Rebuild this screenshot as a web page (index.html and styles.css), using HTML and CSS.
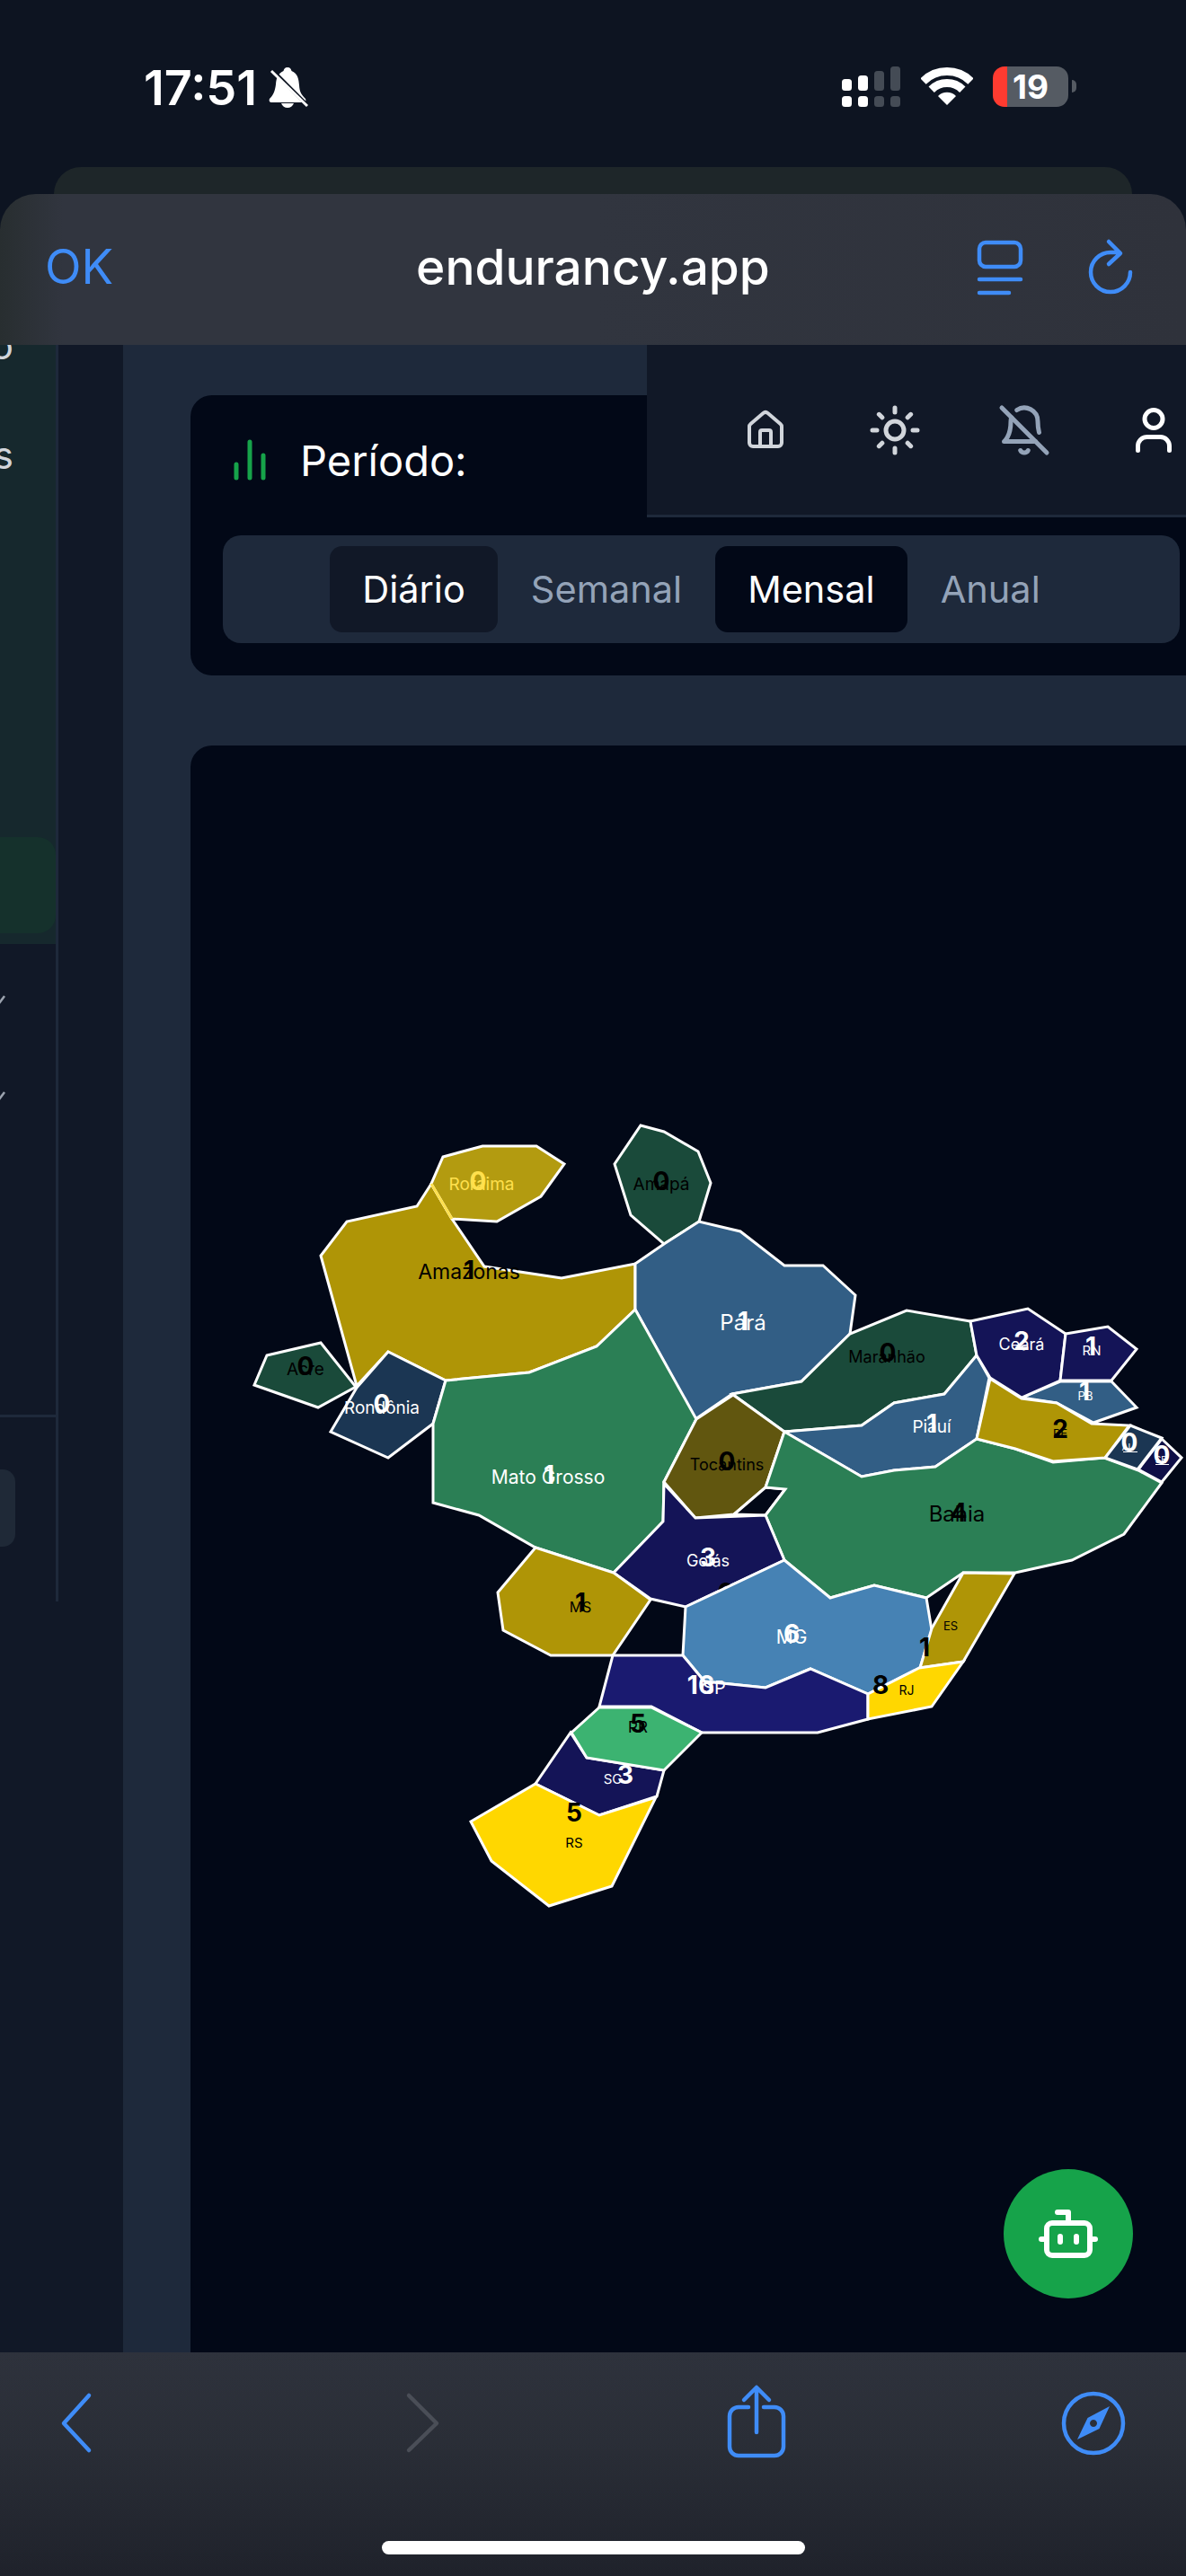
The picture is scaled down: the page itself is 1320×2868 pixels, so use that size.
FILE: index.html
```html
<!DOCTYPE html>
<html lang="pt-BR">
<head>
<meta charset="utf-8">
<title>endurancy.app</title>
<link rel="stylesheet" href="styles.css">
</head>
<body>
<div class="phone">
  <header class="status">
    <span class="time">17:51</span>
    <svg class="ic-mute" viewBox="299 74 44 48"><path class="w" d="M320 75c3 0 4 2 4.500 4 7 3 8 9 8.500 16 .5 8 3 11 7 15 1 2 0 4-2 4h-36c-2 0-3-2-2-4 4-4 6-8 7-16 .5-7 2-12 8.500-15 .5-2 1.500-4 4.500-4zM313 115h14c-1 3-4 5-7 5s-6-2-7-5z"/><path class="mute-gap" d="M301 76l41 41"/><path class="mute-line" d="M302 79l40 39"/></svg>
    <svg class="ic-signal" viewBox="937 74 66 46">
      <rect class="w" x="937" y="88" width="11" height="13" rx="3.500"/><rect class="w" x="955" y="84" width="11" height="17" rx="3.500"/><rect class="sg" x="973" y="79" width="11" height="22" rx="3.500"/><rect class="sg" x="991" y="74" width="11" height="27" rx="3.500"/>
      <rect class="w" x="937" y="107" width="11" height="12" rx="3.500"/><rect class="w" x="955" y="107" width="11" height="12" rx="3.500"/><rect class="sg" x="973" y="107" width="11" height="12" rx="3.500"/><rect class="sg" x="991" y="107" width="11" height="12" rx="3.500"/>
    </svg>
    <svg class="ic-wifi" viewBox="0 0 58 44"><path class="wifi-arc" d="M2.500 16.500A37.500 37.500 0 0 1 55.500 16.500"/><path class="wifi-arc" d="M11.700 25.700A24.500 24.500 0 0 1 46.300 25.700"/><path class="w" d="M29 43L19 33A14 14 0 0 1 39 33Z"/></svg>
    <div class="battery">19</div><div class="nub"></div>
  </header>
  <div class="peek"></div>
  <div class="sheet">
    <span class="ok">OK</span>
    <span class="host">endurancy.app</span>
    <div class="sheet-icons">
      <svg class="ic-blue" viewBox="1084 262 58 70"><rect x="1090" y="270" width="46" height="27" rx="7"/><path d="M1090 311h46M1090 326h33"/></svg>
      <svg class="ic-blue" viewBox="1206 262 60 70"><path d="M1258 303A22 22 0 1 1 1236 281H1246M1234 269l13 13-13 12"/></svg>
    </div>
  </div>
  <main class="content">
    <aside class="sidebar">
      <div class="side-green">
        <span class="side-label">Início</span>
        <span class="side-label">Vendas</span>
        <div class="side-active"></div>
      </div>
      <div class="side-chevs">
        <svg class="chev" viewBox="0 0 6 10"><path d="M-1 9L5 1"/></svg>
        <svg class="chev" viewBox="0 0 6 10"><path d="M-1 9L5 1"/></svg>
      </div>
      <div class="side-foot"><div class="side-btn"></div></div>
    </aside>
    <div class="gutter"></div>
    <div class="main">
      <section class="card period">
        <div class="period-head">
          <svg class="ic-chart" viewBox="0 0 24 24"><path d="M18 20V10M12 20V4M6 20v-6"/></svg>
          <h2 class="period-title">Período:</h2>
        </div>
        <div class="tabs">
          <span class="tab tab-day">Diário</span>
          <span class="tab">Semanal</span>
          <span class="tab tab-month">Mensal</span>
          <span class="tab">Anual</span>
        </div>
      </section>
      <section class="card map-card">
        <svg class="map" viewBox="212 830 1137 1789">
          <g class="regions">
            <polygon class="gold" points="480,1318 464,1343 386,1360 357,1398 397,1543 432,1505 496,1537 589,1528 664,1499 707,1458 707,1407 625,1423 539,1410 503,1357"/>
            <polygon class="gold2" points="493,1288 537,1276 597,1276 628,1296 602,1332 553,1360 503,1357 480,1318"/>
            <polygon class="pine" points="297,1509 357,1495 396,1544 354,1567 283,1542"/>
            <polygon class="navy" points="432,1505 496,1537 482,1585 432,1623 368,1594 397,1545"/>
            <polygon class="pine" points="713,1253 739,1260 777,1282 791,1317 778,1360 739,1385 702,1353 684,1296"/>
            <polygon class="steel" points="707,1407 739,1385 778,1360 824,1371 873,1409 916,1409 952,1442 946,1485 892,1538 815,1552 774,1580 707,1458"/>
            <polygon class="sea" points="496,1537 589,1528 664,1499 707,1458 775,1580 739,1650 738,1694 683,1751 596,1723 533,1687 482,1673 482,1585"/>
            <polygon class="pine" points="815,1552 892,1538 946,1485 1009,1459 1080,1471 1087,1509 1051,1552 995,1562 959,1587 873,1594"/>
            <polygon class="steel" points="873,1594 959,1587 995,1562 1051,1552 1087,1509 1101,1534 1087,1602 1041,1633 995,1637 959,1644"/>
            <polygon class="olive" points="816,1553 873,1594 852,1656 817,1686 774,1690 739,1650 775,1580"/>
            <polygon class="ink" points="817,1686 852,1656 874,1658 852,1687"/>
            <polygon class="sea" points="873,1594 959,1644 995,1637 1041,1633 1087,1602 1130,1613 1172,1628 1229,1623 1267,1637 1293,1651 1251,1708 1193,1737 1130,1751 1072,1751 1031,1779 973,1765 924,1779 873,1737 852,1687 874,1658 852,1656"/>
            <polygon class="indigo" points="739,1652 774,1690 852,1687 873,1737 763,1789 724,1780 683,1751 738,1694"/>
            <text class="cnt t-black" x="808" y="1783">0</text>
            <polygon class="gold" points="596,1723 683,1751 724,1781 682,1843 613,1843 560,1815 554,1773"/>
            <polygon class="sky" points="763,1789 873,1737 924,1779 973,1765 1031,1779 1037,1815 1024,1857 966,1886 902,1858 852,1879 784,1872 760,1843"/>
            <polygon class="blue" points="682,1843 760,1843 784,1872 852,1879 902,1858 966,1886 966,1914 910,1929 781,1929 725,1900 667,1900"/>
            <polygon class="gold" points="1072,1751 1129,1752 1072,1850 1024,1857 1037,1813"/>
            <polygon class="yellow" points="966,1886 1023,1857 1072,1850 1037,1900 966,1914"/>
            <polygon class="indigo" points="635,1929 653,1957 739,1971 731,2000 667,2021 596,1986"/>
            <polygon class="mint" points="667,1901 725,1901 781,1929 739,1971 653,1957 636,1929"/>
            <polygon class="yellow" points="596,1986 667,2021 730,2001 681,2100 611,2122 547,2072 524,2028"/>
            <polygon class="steel" points="1180,1538 1237,1538 1265,1567 1217,1584 1176,1562 1137,1556"/>
            <polygon class="gold" points="1102,1535 1137,1557 1176,1562 1215,1585 1257,1587 1230,1623 1172,1627 1130,1613 1087,1602"/>
            <polygon class="indigo" points="1080,1471 1144,1457 1186,1485 1180,1537 1137,1556 1102,1534 1087,1509"/>
            <polygon class="indigo" points="1186,1485 1233,1477 1265,1502 1237,1537 1180,1537"/>
            <polygon class="navy" points="1258,1587 1293,1601 1266,1636 1230,1623"/>
            <polygon class="deep" points="1293,1602 1315,1623 1293,1650 1267,1636"/>
          </g>
          <line class="seam" x1="480" y1="1318" x2="503" y2="1357"/>
          <path class="tick" d="M1250 1616.500h16M1286 1630.500h15"/>
          <g class="labels">
            <text class="lbl s19 t-yellow" x="536" y="1325">Roraima</text><text class="cnt t-yellow" x="532" y="1325">0</text>
            <text class="lbl s23 t-black" x="522" y="1424">Amazonas</text><text class="cnt t-black" x="522" y="1424">1</text>
            <text class="lbl s19 t-black" x="340" y="1531">Acre</text><text class="cnt t-black" x="340" y="1531">0</text>
            <text class="lbl s19 t-white" x="425" y="1574">Rondônia</text><text class="cnt t-white" x="425" y="1573">0</text>
            <text class="lbl s19 t-black" x="736" y="1325">Amapá</text><text class="cnt t-black" x="736" y="1325">0</text>
            <text class="lbl s24 t-white" x="827" y="1481">Pará</text><text class="cnt t-white" x="827" y="1481">1</text>
            <text class="lbl s21 t-white" x="610" y="1652">Mato Grosso</text><text class="cnt t-white" x="611" y="1652">1</text>
            <text class="lbl s18 t-black" x="987" y="1517">Maranhão</text><text class="cnt t-black" x="988" y="1516">0</text>
            <text class="lbl s18 t-white" x="1137" y="1503">Ceará</text><text class="cnt t-white" x="1137" y="1503">2</text>
            <text class="lbl s15 t-white" x="1215" y="1509">RN</text><text class="cnt t-white" x="1214" y="1509">1</text>
            <text class="lbl s13 t-white" x="1208" y="1559">PB</text><text class="cnt t-white" x="1207" y="1559">1</text>
            <text class="lbl s19 t-white" x="1037" y="1595">Piauí</text><text class="cnt t-white" x="1037" y="1595">1</text>
            <text class="lbl s13 t-black" x="1180" y="1601">PE</text><text class="cnt t-black" x="1180" y="1601">2</text>
            <text class="lbl s10 t-white" x="1255" y="1615">AL</text><text class="cnt t-white" x="1257" y="1616">0</text>
            <text class="lbl s10 t-white" x="1292" y="1629">SE</text><text class="cnt t-white" x="1293" y="1630">0</text>
            <text class="lbl s18 t-black" x="809" y="1637">Tocantins</text><text class="cnt t-black" x="809" y="1637">0</text>
            <text class="lbl s24 t-black" x="1065" y="1694">Bahia</text><text class="cnt t-black" x="1067" y="1694">4</text>
            <text class="lbl s18 t-white" x="788" y="1744">Goiás</text><text class="cnt t-white" x="788" y="1744">3</text>
            <text class="lbl s16 t-black" x="646" y="1795">MS</text><text class="cnt t-black" x="646" y="1794">1</text>
            <text class="lbl s21 t-white" x="881" y="1830">MG</text><text class="cnt t-white" x="881" y="1829">6</text>
            <text class="lbl s20 t-white" x="795" y="1886">SP</text><text class="cnt t-white" x="780" y="1886">16</text>
            <text class="lbl s13 t-black" x="1058" y="1815">ES</text><text class="cnt t-black" x="1029" y="1844">1</text>
            <text class="lbl s14 t-black" x="1009" y="1887">RJ</text><text class="cnt t-black" x="980" y="1886">8</text>
            <text class="lbl s17 t-black" x="710" y="1929">PR</text><text class="cnt t-black" x="710" y="1929">5</text>
            <text class="lbl s15 t-white" x="682" y="1986">SC</text><text class="cnt t-white" x="696" y="1986">3</text>
            <text class="lbl s15 t-black" x="639" y="2057">RS</text><text class="cnt t-black" x="639" y="2028">5</text>
          </g>
        </svg>
      </section>
    </div>
    <nav class="topnav">
      <span class="nav-btn"><svg class="ic-nav ic-home" viewBox="0 0 24 24"><path d="M15 21v-8a1 1 0 0 0-1-1h-4a1 1 0 0 0-1 1v8"/><path d="M3 10a2 2 0 0 1 .709-1.528l7-5.999a2 2 0 0 1 2.582 0l7 5.999A2 2 0 0 1 21 10v9a2 2 0 0 1-2 2H5a2 2 0 0 1-2-2z"/></svg></span>
      <span class="nav-btn"><svg class="ic-nav ic-sun" viewBox="0 0 24 24"><circle cx="12" cy="12" r="4"/><path d="M12 2v2M12 20v2M4.930 4.930l1.410 1.410M17.660 17.660l1.410 1.410M2 12h2M20 12h2M6.340 17.660l-1.410 1.410M19.070 4.930l-1.410 1.410"/></svg></span>
      <span class="nav-btn"><svg class="ic-nav ic-bell" viewBox="0 0 24 24"><path d="M8.700 3A6 6 0 0 1 18 8a21.300 21.300 0 0 0 .6 5"/><path d="M17 17H3s3-2 3-9a4.670 4.670 0 0 1 .3-1.700"/><path d="M10.300 21a1.940 1.940 0 0 0 3.400 0"/><path d="M2 2l20 20"/></svg></span>
      <span class="nav-btn"><svg class="ic-nav ic-user" viewBox="0 0 24 24"><path d="M19 21v-2a4 4 0 0 0-4-4H9a4 4 0 0 0-4 4v2"/><circle cx="12" cy="7" r="4"/></svg></span>
    </nav>
    <button class="bot" type="button" aria-label="Assistente"><svg class="ic-bot" viewBox="0 0 24 24"><path d="M12 8V4H8"/><rect x="4" y="8" width="16" height="12" rx="2"/><path d="M2 14h2M20 14h2M15 13v2M9 13v2"/></svg></button>
  </main>
  <footer class="toolbar">
    <div class="tool-row">
      <svg class="tool ic-blue" viewBox="46 2650 80 96"><path d="M99 2667L71 2698 99 2728"/></svg>
      <svg class="tool ic-dim" viewBox="430 2650 80 96"><path d="M455 2667L486 2698 455 2728"/></svg>
      <svg class="tool ic-blue" viewBox="801 2650 80 96"><path d="M833 2680H822a10 10 0 0 0-10 10v34a10 10 0 0 0 10 10h40a10 10 0 0 0 10-10v-34a10 10 0 0 0-10-10H850M842 2708V2659M828 2672L842 2658 856 2672"/></svg>
      <svg class="tool ic-blue" viewBox="1177 2650 80 96"><circle cx="1217" cy="2698" r="33"/><path class="needle" fill-rule="evenodd" d="M1235 2679L1223.500 2704 1199 2716 1210.500 2692ZM1217 2694a4 4 0 1 0 .01 0Z"/></svg>
    </div>
    <div class="home-bar"></div>
  </footer>
</div>
</body>
</html>
```

FILE: styles.css
```css
* { box-sizing: border-box; }
html, body { margin: 0; padding: 0; background: #0d1421; }
body { font-family: Inter, "Liberation Sans", sans-serif; color: #fff; }
.phone { width: 1320px; height: 2868px; display: flex; flex-direction: column; overflow: hidden; position: relative; background: #0d1421; }

/* status bar */
.status { height: 186px; display: flex; align-items: flex-start; padding: 74px 0 0 160px; }
.time { width: 139px; font-size: 54px; font-weight: 600; line-height: 48px; letter-spacing: 0; white-space: nowrap; }
.ic-mute { width: 44px; height: 48px; }
.w { fill: #fff; }
.sg { fill: #444b55; }
.mute-gap { stroke: #0d1421; stroke-width: 4; fill: none; }
.mute-line { stroke: #fff; stroke-width: 3; fill: none; }
.ic-signal { width: 66px; height: 46px; margin-left: auto; }
.ic-wifi { width: 58px; height: 44px; margin-left: 22px; }
.wifi-arc { fill: none; stroke: #fff; stroke-width: 9; }
.battery { width: 84px; height: 45px; margin-left: 22px; border-radius: 13px; background: linear-gradient(90deg, #ff3b30 16px, #555b63 16px); display: flex; align-items: center; justify-content: center; font-size: 37px; font-weight: 700; }
.nub { width: 5px; height: 14px; margin: 15px 122px 0 4px; border-radius: 0 5px 5px 0; background: #555b63; }

/* browser sheet */
.peek { height: 30px; margin: 0 60px; background: #1e2629; border-radius: 30px 30px 0 0; }
.sheet { height: 168px; display: grid; grid-template-columns: 1fr auto 1fr; align-items: center; padding: 0 60px 6px 50px; border-radius: 40px 40px 0 0; background: linear-gradient(90deg, #282e30 0, #31353f 70px, #31353f 50%, #2f323b 100%); }
.ok { font-size: 53px; font-weight: 400; color: #3f8cf7; }
.host { font-size: 55px; font-weight: 500; color: #fff; margin-left: 10px; }
.sheet-icons { display: flex; justify-content: flex-end; gap: 64px; margin-right: -6px; }
.sheet-icons svg { width: 58px; height: 70px; }
.sheet-icons svg + svg { width: 60px; margin-left: 0; }
.ic-blue { fill: none; stroke: #3f8cf7; stroke-width: 4.500; stroke-linecap: round; stroke-linejoin: round; }
.ic-dim { fill: none; stroke: #4a4e57; stroke-width: 4.500; stroke-linecap: round; stroke-linejoin: round; }
.needle { fill: #3f8cf7; stroke: none; }

/* page */
.content { flex: 1; display: flex; position: relative; overflow: hidden; background: #111827; }
.sidebar { width: 65px; height: 1399px; flex: none; display: flex; flex-direction: column; border-right: 3px solid #1e293b; background: #111827; overflow: hidden; }
.side-green { height: 667px; background: #16282d; display: flex; flex-direction: column; align-items: flex-end; margin-top: 0; overflow: hidden; position: relative; padding-right: 47px; }
.side-label { font-size: 42px; line-height: 122px; color: #d1d5db; white-space: nowrap; }
.side-label:first-child { margin-top: -60px; }
.side-active { position: absolute; left: 0; right: 0; top: 548px; height: 107px; border-radius: 0 20px 20px 0; background: #15312c; }
.side-chevs { height: 527px; display: flex; flex-direction: column; padding-top: 57px; gap: 97px; border-bottom: 3px solid #1e293b; }
.chev { width: 6px; height: 10px; fill: none; stroke: #9ca3af; stroke-width: 2.500; overflow: hidden; }
.side-foot { flex: 1; padding-top: 58px; }
.side-btn { width: 17px; height: 86px; background: #1f2937; border-radius: 0 14px 14px 0; }
.gutter { width: 72px; flex: none; }
.main { flex: none; width: 1212px; padding: 56px 0 0 75px; background: #1e293b; display: flex; flex-direction: column; gap: 78px; }
.card { width: 1137px; background: #020817; border-radius: 24px; flex: none; }
.period { height: 312px; padding: 42px 36px 0; }
.period-head { display: flex; align-items: center; gap: 26px; height: 60px; }
.ic-chart { width: 60px; height: 60px; fill: none; stroke: #16a34a; stroke-width: 2; stroke-linecap: round; }
.period-title { margin: 0; font-size: 47px; font-weight: 400; }
.tabs { margin-top: 54px; height: 120px; border-radius: 20px; background: #1e293b; display: flex; align-items: center; justify-content: center; gap: 1px; }
.tab { height: 96px; padding: 0 36px; border-radius: 14px; display: flex; align-items: center; font-size: 41.500px; font-weight: 400; color: #94a3b8; }
.tab-day { background: #111827; color: #fff; }
.tab-month { background: #020817; color: #fff; }
.map-card { height: 1800px; border-radius: 24px 24px 0 0; }
.map { display: block; width: 1137px; height: 1789px; overflow: visible; }
.regions polygon { stroke: #fff; stroke-width: 3; }
.gold { fill: #af9506; } .gold2 { fill: #b39b10; } .pine { fill: #1a4a3a; } .navy { fill: #1b3653; }
.steel { fill: #325e85; } .sea { fill: #2b7f55; } .olive { fill: #61560f; } .ink { fill: #020817; }
.indigo { fill: #141457; } .sky { fill: #4682b4; } .blue { fill: #1a1a70; } .yellow { fill: #ffd700; }
.mint { fill: #3cb371; } .deep { fill: #0f0f47; }
.seam { stroke: #ffe04d; stroke-width: 3; }
.tick { stroke: #fff; stroke-width: 1; fill: none; }
.lbl, .cnt { text-anchor: middle; font-family: Inter, "Liberation Sans", sans-serif; }
.cnt { font-size: 28px; font-weight: 700; }
.s24 { font-size: 24px; } .s23 { font-size: 23px; } .s21 { font-size: 21px; } .s20 { font-size: 20px; } .s19 { font-size: 19px; } .s18 { font-size: 18px; }
.s17 { font-size: 17px; } .s16 { font-size: 16px; } .s15 { font-size: 15px; } .s14 { font-size: 14px; } .s13 { font-size: 13px; } .s10 { font-size: 10px; }
.t-white { fill: #fff; } .t-black { fill: #000; } .t-yellow { fill: #ffe04d; }

/* overlays */
.topnav { position: absolute; left: 720px; right: 0; top: 0; height: 192px; background: #111827; border-bottom: 3px solid #1e293b; display: flex; align-items: center; padding-left: 60px; }
.nav-btn { width: 144px; height: 60px; display: flex; align-items: center; justify-content: center; flex: none; }
.ic-nav { fill: none; stroke-width: 2; stroke-linecap: round; stroke-linejoin: round; width: 60px; height: 60px; }
.ic-home { width: 48px; height: 48px; stroke: #d1d5db; }
.ic-sun { stroke: #d1d5db; }
.ic-bell { stroke: #94a3b8; }
.ic-user { stroke: #fff; }
.bot { position: absolute; left: 1117px; top: 2031px; width: 144px; height: 144px; border: 0; padding: 0; border-radius: 50%; background: #16a34a; display: flex; align-items: center; justify-content: center; }
.ic-bot { width: 72px; height: 72px; fill: none; stroke: #fff; stroke-width: 2; stroke-linecap: round; stroke-linejoin: round; }

/* bottom toolbar */
.toolbar { height: 249px; flex: none; background: linear-gradient(180deg, #2e323c 0, #2a2e37 40%, #1f222b 100%); display: flex; flex-direction: column; }
.tool-row { display: grid; grid-template-columns: 384px 371px 376px 80px; padding: 31px 0 0 46px; }
.tool { width: 80px; height: 96px; }
.home-bar { width: 471px; height: 15px; margin: 83px 0 0 425px; border-radius: 8px; background: #fff; }
```
